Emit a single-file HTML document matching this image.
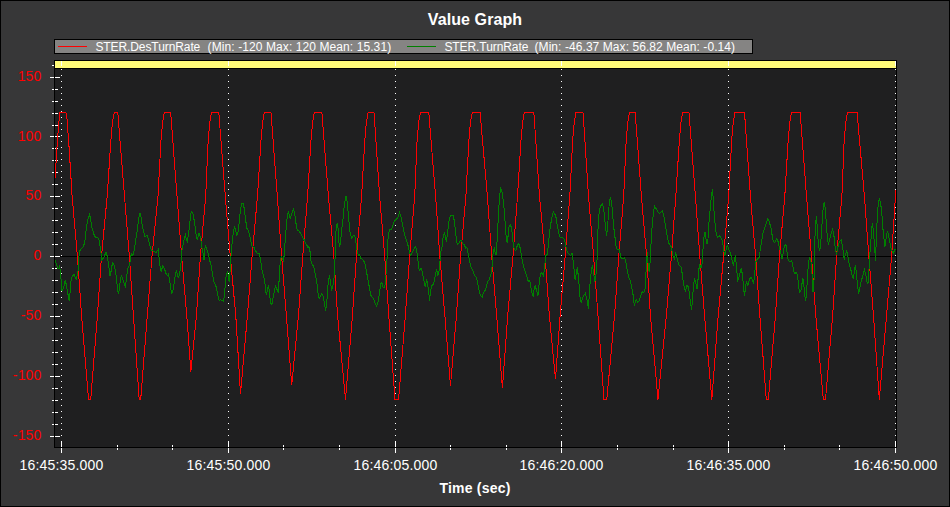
<!DOCTYPE html><html><head><meta charset="utf-8"><title>Value Graph</title><style>
html,body{margin:0;padding:0;background:#373738;}
body{width:950px;height:507px;position:relative;overflow:hidden;font-family:"Liberation Sans",Arial,sans-serif;}
.t{position:absolute;white-space:nowrap;line-height:1;color:#fff;}
.title{font-weight:bold;font-size:16px;letter-spacing:0.1px;left:0;width:950px;text-align:center;top:12px;}
.xt{font-weight:bold;font-size:14px;letter-spacing:0.2px;left:0;width:950px;text-align:center;top:481px;}
.yl{color:#ff0000;font-size:14px;letter-spacing:0.2px;width:41.6px;left:0;text-align:right;}
.xl{font-size:14px;letter-spacing:0.17px;width:120px;text-align:center;top:458px;}
.lg{font-size:12px;top:41px;}
</style></head><body>
<svg width="950" height="507" viewBox="0 0 950 507" style="position:absolute;left:0;top:0" shape-rendering="crispEdges">
<rect x="0" y="0" width="950" height="507" fill="#000"/>
<rect x="1" y="1" width="948" height="505" fill="#373738"/>
<rect x="54" y="39" width="699" height="15" fill="#000"/>
<rect x="55" y="40" width="697" height="13" fill="#858483"/>
<rect x="58" y="46" width="29" height="1" fill="#ff0000"/>
<rect x="407" y="46" width="29" height="1" fill="#008000"/>
<rect x="55" y="61" width="841" height="386" fill="#1f1f20"/>
<rect x="55" y="61" width="841" height="7" fill="#fffa78"/>
<rect x="55" y="68" width="841" height="1" fill="#000"/>
<rect x="55" y="256" width="841" height="1" fill="#000"/>
<rect x="61" y="69" width="1" height="1" fill="#fff"/>
<rect x="61" y="75" width="1" height="1" fill="#fff"/>
<rect x="61" y="81" width="1" height="1" fill="#fff"/>
<rect x="61" y="87" width="1" height="1" fill="#fff"/>
<rect x="61" y="93" width="1" height="1" fill="#fff"/>
<rect x="61" y="99" width="1" height="1" fill="#fff"/>
<rect x="61" y="105" width="1" height="1" fill="#fff"/>
<rect x="61" y="111" width="1" height="1" fill="#fff"/>
<rect x="61" y="117" width="1" height="1" fill="#fff"/>
<rect x="61" y="123" width="1" height="1" fill="#fff"/>
<rect x="61" y="129" width="1" height="1" fill="#fff"/>
<rect x="61" y="135" width="1" height="1" fill="#fff"/>
<rect x="61" y="141" width="1" height="1" fill="#fff"/>
<rect x="61" y="147" width="1" height="1" fill="#fff"/>
<rect x="61" y="153" width="1" height="1" fill="#fff"/>
<rect x="61" y="159" width="1" height="1" fill="#fff"/>
<rect x="61" y="165" width="1" height="1" fill="#fff"/>
<rect x="61" y="171" width="1" height="1" fill="#fff"/>
<rect x="61" y="177" width="1" height="1" fill="#fff"/>
<rect x="61" y="183" width="1" height="1" fill="#fff"/>
<rect x="61" y="189" width="1" height="1" fill="#fff"/>
<rect x="61" y="195" width="1" height="1" fill="#fff"/>
<rect x="61" y="201" width="1" height="1" fill="#fff"/>
<rect x="61" y="207" width="1" height="1" fill="#fff"/>
<rect x="61" y="213" width="1" height="1" fill="#fff"/>
<rect x="61" y="219" width="1" height="1" fill="#fff"/>
<rect x="61" y="225" width="1" height="1" fill="#fff"/>
<rect x="61" y="231" width="1" height="1" fill="#fff"/>
<rect x="61" y="237" width="1" height="1" fill="#fff"/>
<rect x="61" y="243" width="1" height="1" fill="#fff"/>
<rect x="61" y="249" width="1" height="1" fill="#fff"/>
<rect x="61" y="255" width="1" height="1" fill="#fff"/>
<rect x="61" y="261" width="1" height="1" fill="#fff"/>
<rect x="61" y="267" width="1" height="1" fill="#fff"/>
<rect x="61" y="273" width="1" height="1" fill="#fff"/>
<rect x="61" y="279" width="1" height="1" fill="#fff"/>
<rect x="61" y="285" width="1" height="1" fill="#fff"/>
<rect x="61" y="291" width="1" height="1" fill="#fff"/>
<rect x="61" y="297" width="1" height="1" fill="#fff"/>
<rect x="61" y="303" width="1" height="1" fill="#fff"/>
<rect x="61" y="309" width="1" height="1" fill="#fff"/>
<rect x="61" y="315" width="1" height="1" fill="#fff"/>
<rect x="61" y="321" width="1" height="1" fill="#fff"/>
<rect x="61" y="327" width="1" height="1" fill="#fff"/>
<rect x="61" y="333" width="1" height="1" fill="#fff"/>
<rect x="61" y="339" width="1" height="1" fill="#fff"/>
<rect x="61" y="345" width="1" height="1" fill="#fff"/>
<rect x="61" y="351" width="1" height="1" fill="#fff"/>
<rect x="61" y="357" width="1" height="1" fill="#fff"/>
<rect x="61" y="363" width="1" height="1" fill="#fff"/>
<rect x="61" y="369" width="1" height="1" fill="#fff"/>
<rect x="61" y="375" width="1" height="1" fill="#fff"/>
<rect x="61" y="381" width="1" height="1" fill="#fff"/>
<rect x="61" y="387" width="1" height="1" fill="#fff"/>
<rect x="61" y="393" width="1" height="1" fill="#fff"/>
<rect x="61" y="399" width="1" height="1" fill="#fff"/>
<rect x="61" y="405" width="1" height="1" fill="#fff"/>
<rect x="61" y="411" width="1" height="1" fill="#fff"/>
<rect x="61" y="417" width="1" height="1" fill="#fff"/>
<rect x="61" y="423" width="1" height="1" fill="#fff"/>
<rect x="61" y="429" width="1" height="1" fill="#fff"/>
<rect x="61" y="435" width="1" height="1" fill="#fff"/>
<rect x="61" y="441" width="1" height="1" fill="#fff"/>
<rect x="61" y="61" width="1" height="5" fill="#fff"/>
<rect x="61" y="442" width="1" height="11" fill="#fff"/>
<rect x="228" y="69" width="1" height="1" fill="#fff"/>
<rect x="228" y="75" width="1" height="1" fill="#fff"/>
<rect x="228" y="81" width="1" height="1" fill="#fff"/>
<rect x="228" y="87" width="1" height="1" fill="#fff"/>
<rect x="228" y="93" width="1" height="1" fill="#fff"/>
<rect x="228" y="99" width="1" height="1" fill="#fff"/>
<rect x="228" y="105" width="1" height="1" fill="#fff"/>
<rect x="228" y="111" width="1" height="1" fill="#fff"/>
<rect x="228" y="117" width="1" height="1" fill="#fff"/>
<rect x="228" y="123" width="1" height="1" fill="#fff"/>
<rect x="228" y="129" width="1" height="1" fill="#fff"/>
<rect x="228" y="135" width="1" height="1" fill="#fff"/>
<rect x="228" y="141" width="1" height="1" fill="#fff"/>
<rect x="228" y="147" width="1" height="1" fill="#fff"/>
<rect x="228" y="153" width="1" height="1" fill="#fff"/>
<rect x="228" y="159" width="1" height="1" fill="#fff"/>
<rect x="228" y="165" width="1" height="1" fill="#fff"/>
<rect x="228" y="171" width="1" height="1" fill="#fff"/>
<rect x="228" y="177" width="1" height="1" fill="#fff"/>
<rect x="228" y="183" width="1" height="1" fill="#fff"/>
<rect x="228" y="189" width="1" height="1" fill="#fff"/>
<rect x="228" y="195" width="1" height="1" fill="#fff"/>
<rect x="228" y="201" width="1" height="1" fill="#fff"/>
<rect x="228" y="207" width="1" height="1" fill="#fff"/>
<rect x="228" y="213" width="1" height="1" fill="#fff"/>
<rect x="228" y="219" width="1" height="1" fill="#fff"/>
<rect x="228" y="225" width="1" height="1" fill="#fff"/>
<rect x="228" y="231" width="1" height="1" fill="#fff"/>
<rect x="228" y="237" width="1" height="1" fill="#fff"/>
<rect x="228" y="243" width="1" height="1" fill="#fff"/>
<rect x="228" y="249" width="1" height="1" fill="#fff"/>
<rect x="228" y="255" width="1" height="1" fill="#fff"/>
<rect x="228" y="261" width="1" height="1" fill="#fff"/>
<rect x="228" y="267" width="1" height="1" fill="#fff"/>
<rect x="228" y="273" width="1" height="1" fill="#fff"/>
<rect x="228" y="279" width="1" height="1" fill="#fff"/>
<rect x="228" y="285" width="1" height="1" fill="#fff"/>
<rect x="228" y="291" width="1" height="1" fill="#fff"/>
<rect x="228" y="297" width="1" height="1" fill="#fff"/>
<rect x="228" y="303" width="1" height="1" fill="#fff"/>
<rect x="228" y="309" width="1" height="1" fill="#fff"/>
<rect x="228" y="315" width="1" height="1" fill="#fff"/>
<rect x="228" y="321" width="1" height="1" fill="#fff"/>
<rect x="228" y="327" width="1" height="1" fill="#fff"/>
<rect x="228" y="333" width="1" height="1" fill="#fff"/>
<rect x="228" y="339" width="1" height="1" fill="#fff"/>
<rect x="228" y="345" width="1" height="1" fill="#fff"/>
<rect x="228" y="351" width="1" height="1" fill="#fff"/>
<rect x="228" y="357" width="1" height="1" fill="#fff"/>
<rect x="228" y="363" width="1" height="1" fill="#fff"/>
<rect x="228" y="369" width="1" height="1" fill="#fff"/>
<rect x="228" y="375" width="1" height="1" fill="#fff"/>
<rect x="228" y="381" width="1" height="1" fill="#fff"/>
<rect x="228" y="387" width="1" height="1" fill="#fff"/>
<rect x="228" y="393" width="1" height="1" fill="#fff"/>
<rect x="228" y="399" width="1" height="1" fill="#fff"/>
<rect x="228" y="405" width="1" height="1" fill="#fff"/>
<rect x="228" y="411" width="1" height="1" fill="#fff"/>
<rect x="228" y="417" width="1" height="1" fill="#fff"/>
<rect x="228" y="423" width="1" height="1" fill="#fff"/>
<rect x="228" y="429" width="1" height="1" fill="#fff"/>
<rect x="228" y="435" width="1" height="1" fill="#fff"/>
<rect x="228" y="441" width="1" height="1" fill="#fff"/>
<rect x="228" y="61" width="1" height="5" fill="#fff"/>
<rect x="228" y="442" width="1" height="11" fill="#fff"/>
<rect x="395" y="69" width="1" height="1" fill="#fff"/>
<rect x="395" y="75" width="1" height="1" fill="#fff"/>
<rect x="395" y="81" width="1" height="1" fill="#fff"/>
<rect x="395" y="87" width="1" height="1" fill="#fff"/>
<rect x="395" y="93" width="1" height="1" fill="#fff"/>
<rect x="395" y="99" width="1" height="1" fill="#fff"/>
<rect x="395" y="105" width="1" height="1" fill="#fff"/>
<rect x="395" y="111" width="1" height="1" fill="#fff"/>
<rect x="395" y="117" width="1" height="1" fill="#fff"/>
<rect x="395" y="123" width="1" height="1" fill="#fff"/>
<rect x="395" y="129" width="1" height="1" fill="#fff"/>
<rect x="395" y="135" width="1" height="1" fill="#fff"/>
<rect x="395" y="141" width="1" height="1" fill="#fff"/>
<rect x="395" y="147" width="1" height="1" fill="#fff"/>
<rect x="395" y="153" width="1" height="1" fill="#fff"/>
<rect x="395" y="159" width="1" height="1" fill="#fff"/>
<rect x="395" y="165" width="1" height="1" fill="#fff"/>
<rect x="395" y="171" width="1" height="1" fill="#fff"/>
<rect x="395" y="177" width="1" height="1" fill="#fff"/>
<rect x="395" y="183" width="1" height="1" fill="#fff"/>
<rect x="395" y="189" width="1" height="1" fill="#fff"/>
<rect x="395" y="195" width="1" height="1" fill="#fff"/>
<rect x="395" y="201" width="1" height="1" fill="#fff"/>
<rect x="395" y="207" width="1" height="1" fill="#fff"/>
<rect x="395" y="213" width="1" height="1" fill="#fff"/>
<rect x="395" y="219" width="1" height="1" fill="#fff"/>
<rect x="395" y="225" width="1" height="1" fill="#fff"/>
<rect x="395" y="231" width="1" height="1" fill="#fff"/>
<rect x="395" y="237" width="1" height="1" fill="#fff"/>
<rect x="395" y="243" width="1" height="1" fill="#fff"/>
<rect x="395" y="249" width="1" height="1" fill="#fff"/>
<rect x="395" y="255" width="1" height="1" fill="#fff"/>
<rect x="395" y="261" width="1" height="1" fill="#fff"/>
<rect x="395" y="267" width="1" height="1" fill="#fff"/>
<rect x="395" y="273" width="1" height="1" fill="#fff"/>
<rect x="395" y="279" width="1" height="1" fill="#fff"/>
<rect x="395" y="285" width="1" height="1" fill="#fff"/>
<rect x="395" y="291" width="1" height="1" fill="#fff"/>
<rect x="395" y="297" width="1" height="1" fill="#fff"/>
<rect x="395" y="303" width="1" height="1" fill="#fff"/>
<rect x="395" y="309" width="1" height="1" fill="#fff"/>
<rect x="395" y="315" width="1" height="1" fill="#fff"/>
<rect x="395" y="321" width="1" height="1" fill="#fff"/>
<rect x="395" y="327" width="1" height="1" fill="#fff"/>
<rect x="395" y="333" width="1" height="1" fill="#fff"/>
<rect x="395" y="339" width="1" height="1" fill="#fff"/>
<rect x="395" y="345" width="1" height="1" fill="#fff"/>
<rect x="395" y="351" width="1" height="1" fill="#fff"/>
<rect x="395" y="357" width="1" height="1" fill="#fff"/>
<rect x="395" y="363" width="1" height="1" fill="#fff"/>
<rect x="395" y="369" width="1" height="1" fill="#fff"/>
<rect x="395" y="375" width="1" height="1" fill="#fff"/>
<rect x="395" y="381" width="1" height="1" fill="#fff"/>
<rect x="395" y="387" width="1" height="1" fill="#fff"/>
<rect x="395" y="393" width="1" height="1" fill="#fff"/>
<rect x="395" y="399" width="1" height="1" fill="#fff"/>
<rect x="395" y="405" width="1" height="1" fill="#fff"/>
<rect x="395" y="411" width="1" height="1" fill="#fff"/>
<rect x="395" y="417" width="1" height="1" fill="#fff"/>
<rect x="395" y="423" width="1" height="1" fill="#fff"/>
<rect x="395" y="429" width="1" height="1" fill="#fff"/>
<rect x="395" y="435" width="1" height="1" fill="#fff"/>
<rect x="395" y="441" width="1" height="1" fill="#fff"/>
<rect x="395" y="61" width="1" height="5" fill="#fff"/>
<rect x="395" y="442" width="1" height="11" fill="#fff"/>
<rect x="561" y="69" width="1" height="1" fill="#fff"/>
<rect x="561" y="75" width="1" height="1" fill="#fff"/>
<rect x="561" y="81" width="1" height="1" fill="#fff"/>
<rect x="561" y="87" width="1" height="1" fill="#fff"/>
<rect x="561" y="93" width="1" height="1" fill="#fff"/>
<rect x="561" y="99" width="1" height="1" fill="#fff"/>
<rect x="561" y="105" width="1" height="1" fill="#fff"/>
<rect x="561" y="111" width="1" height="1" fill="#fff"/>
<rect x="561" y="117" width="1" height="1" fill="#fff"/>
<rect x="561" y="123" width="1" height="1" fill="#fff"/>
<rect x="561" y="129" width="1" height="1" fill="#fff"/>
<rect x="561" y="135" width="1" height="1" fill="#fff"/>
<rect x="561" y="141" width="1" height="1" fill="#fff"/>
<rect x="561" y="147" width="1" height="1" fill="#fff"/>
<rect x="561" y="153" width="1" height="1" fill="#fff"/>
<rect x="561" y="159" width="1" height="1" fill="#fff"/>
<rect x="561" y="165" width="1" height="1" fill="#fff"/>
<rect x="561" y="171" width="1" height="1" fill="#fff"/>
<rect x="561" y="177" width="1" height="1" fill="#fff"/>
<rect x="561" y="183" width="1" height="1" fill="#fff"/>
<rect x="561" y="189" width="1" height="1" fill="#fff"/>
<rect x="561" y="195" width="1" height="1" fill="#fff"/>
<rect x="561" y="201" width="1" height="1" fill="#fff"/>
<rect x="561" y="207" width="1" height="1" fill="#fff"/>
<rect x="561" y="213" width="1" height="1" fill="#fff"/>
<rect x="561" y="219" width="1" height="1" fill="#fff"/>
<rect x="561" y="225" width="1" height="1" fill="#fff"/>
<rect x="561" y="231" width="1" height="1" fill="#fff"/>
<rect x="561" y="237" width="1" height="1" fill="#fff"/>
<rect x="561" y="243" width="1" height="1" fill="#fff"/>
<rect x="561" y="249" width="1" height="1" fill="#fff"/>
<rect x="561" y="255" width="1" height="1" fill="#fff"/>
<rect x="561" y="261" width="1" height="1" fill="#fff"/>
<rect x="561" y="267" width="1" height="1" fill="#fff"/>
<rect x="561" y="273" width="1" height="1" fill="#fff"/>
<rect x="561" y="279" width="1" height="1" fill="#fff"/>
<rect x="561" y="285" width="1" height="1" fill="#fff"/>
<rect x="561" y="291" width="1" height="1" fill="#fff"/>
<rect x="561" y="297" width="1" height="1" fill="#fff"/>
<rect x="561" y="303" width="1" height="1" fill="#fff"/>
<rect x="561" y="309" width="1" height="1" fill="#fff"/>
<rect x="561" y="315" width="1" height="1" fill="#fff"/>
<rect x="561" y="321" width="1" height="1" fill="#fff"/>
<rect x="561" y="327" width="1" height="1" fill="#fff"/>
<rect x="561" y="333" width="1" height="1" fill="#fff"/>
<rect x="561" y="339" width="1" height="1" fill="#fff"/>
<rect x="561" y="345" width="1" height="1" fill="#fff"/>
<rect x="561" y="351" width="1" height="1" fill="#fff"/>
<rect x="561" y="357" width="1" height="1" fill="#fff"/>
<rect x="561" y="363" width="1" height="1" fill="#fff"/>
<rect x="561" y="369" width="1" height="1" fill="#fff"/>
<rect x="561" y="375" width="1" height="1" fill="#fff"/>
<rect x="561" y="381" width="1" height="1" fill="#fff"/>
<rect x="561" y="387" width="1" height="1" fill="#fff"/>
<rect x="561" y="393" width="1" height="1" fill="#fff"/>
<rect x="561" y="399" width="1" height="1" fill="#fff"/>
<rect x="561" y="405" width="1" height="1" fill="#fff"/>
<rect x="561" y="411" width="1" height="1" fill="#fff"/>
<rect x="561" y="417" width="1" height="1" fill="#fff"/>
<rect x="561" y="423" width="1" height="1" fill="#fff"/>
<rect x="561" y="429" width="1" height="1" fill="#fff"/>
<rect x="561" y="435" width="1" height="1" fill="#fff"/>
<rect x="561" y="441" width="1" height="1" fill="#fff"/>
<rect x="561" y="61" width="1" height="5" fill="#fff"/>
<rect x="561" y="442" width="1" height="11" fill="#fff"/>
<rect x="728" y="69" width="1" height="1" fill="#fff"/>
<rect x="728" y="75" width="1" height="1" fill="#fff"/>
<rect x="728" y="81" width="1" height="1" fill="#fff"/>
<rect x="728" y="87" width="1" height="1" fill="#fff"/>
<rect x="728" y="93" width="1" height="1" fill="#fff"/>
<rect x="728" y="99" width="1" height="1" fill="#fff"/>
<rect x="728" y="105" width="1" height="1" fill="#fff"/>
<rect x="728" y="111" width="1" height="1" fill="#fff"/>
<rect x="728" y="117" width="1" height="1" fill="#fff"/>
<rect x="728" y="123" width="1" height="1" fill="#fff"/>
<rect x="728" y="129" width="1" height="1" fill="#fff"/>
<rect x="728" y="135" width="1" height="1" fill="#fff"/>
<rect x="728" y="141" width="1" height="1" fill="#fff"/>
<rect x="728" y="147" width="1" height="1" fill="#fff"/>
<rect x="728" y="153" width="1" height="1" fill="#fff"/>
<rect x="728" y="159" width="1" height="1" fill="#fff"/>
<rect x="728" y="165" width="1" height="1" fill="#fff"/>
<rect x="728" y="171" width="1" height="1" fill="#fff"/>
<rect x="728" y="177" width="1" height="1" fill="#fff"/>
<rect x="728" y="183" width="1" height="1" fill="#fff"/>
<rect x="728" y="189" width="1" height="1" fill="#fff"/>
<rect x="728" y="195" width="1" height="1" fill="#fff"/>
<rect x="728" y="201" width="1" height="1" fill="#fff"/>
<rect x="728" y="207" width="1" height="1" fill="#fff"/>
<rect x="728" y="213" width="1" height="1" fill="#fff"/>
<rect x="728" y="219" width="1" height="1" fill="#fff"/>
<rect x="728" y="225" width="1" height="1" fill="#fff"/>
<rect x="728" y="231" width="1" height="1" fill="#fff"/>
<rect x="728" y="237" width="1" height="1" fill="#fff"/>
<rect x="728" y="243" width="1" height="1" fill="#fff"/>
<rect x="728" y="249" width="1" height="1" fill="#fff"/>
<rect x="728" y="255" width="1" height="1" fill="#fff"/>
<rect x="728" y="261" width="1" height="1" fill="#fff"/>
<rect x="728" y="267" width="1" height="1" fill="#fff"/>
<rect x="728" y="273" width="1" height="1" fill="#fff"/>
<rect x="728" y="279" width="1" height="1" fill="#fff"/>
<rect x="728" y="285" width="1" height="1" fill="#fff"/>
<rect x="728" y="291" width="1" height="1" fill="#fff"/>
<rect x="728" y="297" width="1" height="1" fill="#fff"/>
<rect x="728" y="303" width="1" height="1" fill="#fff"/>
<rect x="728" y="309" width="1" height="1" fill="#fff"/>
<rect x="728" y="315" width="1" height="1" fill="#fff"/>
<rect x="728" y="321" width="1" height="1" fill="#fff"/>
<rect x="728" y="327" width="1" height="1" fill="#fff"/>
<rect x="728" y="333" width="1" height="1" fill="#fff"/>
<rect x="728" y="339" width="1" height="1" fill="#fff"/>
<rect x="728" y="345" width="1" height="1" fill="#fff"/>
<rect x="728" y="351" width="1" height="1" fill="#fff"/>
<rect x="728" y="357" width="1" height="1" fill="#fff"/>
<rect x="728" y="363" width="1" height="1" fill="#fff"/>
<rect x="728" y="369" width="1" height="1" fill="#fff"/>
<rect x="728" y="375" width="1" height="1" fill="#fff"/>
<rect x="728" y="381" width="1" height="1" fill="#fff"/>
<rect x="728" y="387" width="1" height="1" fill="#fff"/>
<rect x="728" y="393" width="1" height="1" fill="#fff"/>
<rect x="728" y="399" width="1" height="1" fill="#fff"/>
<rect x="728" y="405" width="1" height="1" fill="#fff"/>
<rect x="728" y="411" width="1" height="1" fill="#fff"/>
<rect x="728" y="417" width="1" height="1" fill="#fff"/>
<rect x="728" y="423" width="1" height="1" fill="#fff"/>
<rect x="728" y="429" width="1" height="1" fill="#fff"/>
<rect x="728" y="435" width="1" height="1" fill="#fff"/>
<rect x="728" y="441" width="1" height="1" fill="#fff"/>
<rect x="728" y="61" width="1" height="5" fill="#fff"/>
<rect x="728" y="442" width="1" height="11" fill="#fff"/>
<rect x="895" y="69" width="1" height="1" fill="#fff"/>
<rect x="895" y="75" width="1" height="1" fill="#fff"/>
<rect x="895" y="81" width="1" height="1" fill="#fff"/>
<rect x="895" y="87" width="1" height="1" fill="#fff"/>
<rect x="895" y="93" width="1" height="1" fill="#fff"/>
<rect x="895" y="99" width="1" height="1" fill="#fff"/>
<rect x="895" y="105" width="1" height="1" fill="#fff"/>
<rect x="895" y="111" width="1" height="1" fill="#fff"/>
<rect x="895" y="117" width="1" height="1" fill="#fff"/>
<rect x="895" y="123" width="1" height="1" fill="#fff"/>
<rect x="895" y="129" width="1" height="1" fill="#fff"/>
<rect x="895" y="135" width="1" height="1" fill="#fff"/>
<rect x="895" y="141" width="1" height="1" fill="#fff"/>
<rect x="895" y="147" width="1" height="1" fill="#fff"/>
<rect x="895" y="153" width="1" height="1" fill="#fff"/>
<rect x="895" y="159" width="1" height="1" fill="#fff"/>
<rect x="895" y="165" width="1" height="1" fill="#fff"/>
<rect x="895" y="171" width="1" height="1" fill="#fff"/>
<rect x="895" y="177" width="1" height="1" fill="#fff"/>
<rect x="895" y="183" width="1" height="1" fill="#fff"/>
<rect x="895" y="189" width="1" height="1" fill="#fff"/>
<rect x="895" y="195" width="1" height="1" fill="#fff"/>
<rect x="895" y="201" width="1" height="1" fill="#fff"/>
<rect x="895" y="207" width="1" height="1" fill="#fff"/>
<rect x="895" y="213" width="1" height="1" fill="#fff"/>
<rect x="895" y="219" width="1" height="1" fill="#fff"/>
<rect x="895" y="225" width="1" height="1" fill="#fff"/>
<rect x="895" y="231" width="1" height="1" fill="#fff"/>
<rect x="895" y="237" width="1" height="1" fill="#fff"/>
<rect x="895" y="243" width="1" height="1" fill="#fff"/>
<rect x="895" y="249" width="1" height="1" fill="#fff"/>
<rect x="895" y="255" width="1" height="1" fill="#fff"/>
<rect x="895" y="261" width="1" height="1" fill="#fff"/>
<rect x="895" y="267" width="1" height="1" fill="#fff"/>
<rect x="895" y="273" width="1" height="1" fill="#fff"/>
<rect x="895" y="279" width="1" height="1" fill="#fff"/>
<rect x="895" y="285" width="1" height="1" fill="#fff"/>
<rect x="895" y="291" width="1" height="1" fill="#fff"/>
<rect x="895" y="297" width="1" height="1" fill="#fff"/>
<rect x="895" y="303" width="1" height="1" fill="#fff"/>
<rect x="895" y="309" width="1" height="1" fill="#fff"/>
<rect x="895" y="315" width="1" height="1" fill="#fff"/>
<rect x="895" y="321" width="1" height="1" fill="#fff"/>
<rect x="895" y="327" width="1" height="1" fill="#fff"/>
<rect x="895" y="333" width="1" height="1" fill="#fff"/>
<rect x="895" y="339" width="1" height="1" fill="#fff"/>
<rect x="895" y="345" width="1" height="1" fill="#fff"/>
<rect x="895" y="351" width="1" height="1" fill="#fff"/>
<rect x="895" y="357" width="1" height="1" fill="#fff"/>
<rect x="895" y="363" width="1" height="1" fill="#fff"/>
<rect x="895" y="369" width="1" height="1" fill="#fff"/>
<rect x="895" y="375" width="1" height="1" fill="#fff"/>
<rect x="895" y="381" width="1" height="1" fill="#fff"/>
<rect x="895" y="387" width="1" height="1" fill="#fff"/>
<rect x="895" y="393" width="1" height="1" fill="#fff"/>
<rect x="895" y="399" width="1" height="1" fill="#fff"/>
<rect x="895" y="405" width="1" height="1" fill="#fff"/>
<rect x="895" y="411" width="1" height="1" fill="#fff"/>
<rect x="895" y="417" width="1" height="1" fill="#fff"/>
<rect x="895" y="423" width="1" height="1" fill="#fff"/>
<rect x="895" y="429" width="1" height="1" fill="#fff"/>
<rect x="895" y="435" width="1" height="1" fill="#fff"/>
<rect x="895" y="441" width="1" height="1" fill="#fff"/>
<rect x="895" y="61" width="1" height="5" fill="#fff"/>
<rect x="895" y="442" width="1" height="11" fill="#fff"/>
<rect x="117" y="445" width="1" height="5" fill="#fff"/>
<rect x="172" y="445" width="1" height="5" fill="#fff"/>
<rect x="283" y="445" width="1" height="5" fill="#fff"/>
<rect x="339" y="445" width="1" height="5" fill="#fff"/>
<rect x="450" y="445" width="1" height="5" fill="#fff"/>
<rect x="506" y="445" width="1" height="5" fill="#fff"/>
<rect x="617" y="445" width="1" height="5" fill="#fff"/>
<rect x="673" y="445" width="1" height="5" fill="#fff"/>
<rect x="784" y="445" width="1" height="5" fill="#fff"/>
<rect x="839" y="445" width="1" height="5" fill="#fff"/>
<rect x="50" y="436" width="10" height="1" fill="#fff"/>
<rect x="52" y="424" width="6" height="1" fill="#fff"/>
<rect x="52" y="412" width="6" height="1" fill="#fff"/>
<rect x="52" y="400" width="6" height="1" fill="#fff"/>
<rect x="52" y="388" width="6" height="1" fill="#fff"/>
<rect x="50" y="376" width="10" height="1" fill="#fff"/>
<rect x="52" y="364" width="6" height="1" fill="#fff"/>
<rect x="52" y="352" width="6" height="1" fill="#fff"/>
<rect x="52" y="340" width="6" height="1" fill="#fff"/>
<rect x="52" y="328" width="6" height="1" fill="#fff"/>
<rect x="50" y="316" width="10" height="1" fill="#fff"/>
<rect x="52" y="304" width="6" height="1" fill="#fff"/>
<rect x="52" y="292" width="6" height="1" fill="#fff"/>
<rect x="52" y="280" width="6" height="1" fill="#fff"/>
<rect x="52" y="268" width="6" height="1" fill="#fff"/>
<rect x="50" y="256" width="10" height="1" fill="#fff"/>
<rect x="52" y="244" width="6" height="1" fill="#fff"/>
<rect x="52" y="232" width="6" height="1" fill="#fff"/>
<rect x="52" y="220" width="6" height="1" fill="#fff"/>
<rect x="52" y="208" width="6" height="1" fill="#fff"/>
<rect x="50" y="196" width="10" height="1" fill="#fff"/>
<rect x="52" y="184" width="6" height="1" fill="#fff"/>
<rect x="52" y="172" width="6" height="1" fill="#fff"/>
<rect x="52" y="160" width="6" height="1" fill="#fff"/>
<rect x="52" y="148" width="6" height="1" fill="#fff"/>
<rect x="50" y="136" width="10" height="1" fill="#fff"/>
<rect x="52" y="125" width="6" height="1" fill="#fff"/>
<rect x="52" y="113" width="6" height="1" fill="#fff"/>
<rect x="52" y="101" width="6" height="1" fill="#fff"/>
<rect x="52" y="89" width="6" height="1" fill="#fff"/>
<rect x="50" y="77" width="10" height="1" fill="#fff"/>
<rect x="52" y="65" width="2" height="1" fill="#fff"/>
<clipPath id="c"><rect x="55" y="61" width="841" height="386"/></clipPath>
<g clip-path="url(#c)">
<polyline points="55.5,178.0 56.0,163.0 57.5,140.0 58.5,127.0 59.5,116.0 59.6,112.5 65.9,112.5 66.5,113.5 67.4,122.9 68.2,136.5 68.8,143.0 72.1,196.0 77.4,256.0 81.6,316.0 88.6,399.5 90.7,399.5 97.4,316.0 101.5,256.0 107.2,196.0 110.9,140.0 112.5,122.0 114.2,112.5 117.8,112.5 118.5,122.0 124.5,196.0 129.3,256.0 139.2,399.5 140.7,399.5 152.0,256.0 158.0,196.0 161.0,140.0 162.6,122.0 164.3,112.5 170.7,112.5 171.4,122.0 177.0,196.0 181.6,256.0 186.8,316.0 190.9,371.5 196.4,316.0 200.4,256.0 205.7,196.0 208.2,140.0 209.8,122.0 211.5,112.5 218.8,112.5 219.5,122.0 225.3,196.0 230.3,256.0 235.8,316.0 240.5,393.6 247.4,316.0 252.1,256.0 257.5,196.0 261.0,140.0 262.6,122.0 264.3,112.5 271.0,112.5 271.7,122.0 277.3,196.0 281.6,256.0 286.4,316.0 291.7,385.2 298.4,316.0 302.8,256.0 307.6,196.0 311.0,140.0 312.6,122.0 314.3,112.5 321.9,112.5 322.6,122.0 328.4,196.0 333.8,256.0 337.6,316.0 345.5,399.5 352.4,316.0 356.5,256.0 361.6,196.0 364.8,140.0 366.4,122.0 368.1,112.5 374.0,112.5 374.7,122.0 379.6,196.0 384.7,256.0 388.8,316.0 395.0,399.5 398.6,399.5 405.3,316.0 409.7,256.0 414.7,196.0 417.1,140.0 418.7,122.0 420.4,112.5 428.8,112.5 429.5,122.0 435.6,196.0 439.8,256.0 444.9,316.0 450.5,385.6 456.4,316.0 460.6,256.0 465.9,196.0 468.9,140.0 470.5,122.0 472.2,112.5 480.2,112.5 480.9,122.0 487.4,196.0 491.7,256.0 496.7,316.0 502.4,388.3 507.7,316.0 513.0,256.0 517.5,196.0 521.0,140.0 522.6,122.0 524.3,112.5 533.8,112.5 534.5,122.0 539.5,196.0 545.1,256.0 549.4,316.0 555.5,379.3 560.1,316.0 565.2,256.0 569.8,196.0 572.7,140.0 574.3,122.0 576.0,112.5 583.0,112.5 583.7,122.0 588.5,196.0 593.6,256.0 598.0,316.0 604.0,399.5 606.8,399.5 614.5,316.0 618.8,256.0 623.7,196.0 626.2,140.0 627.8,122.0 629.5,112.5 635.2,112.5 635.9,122.0 641.4,196.0 646.6,256.0 650.5,316.0 658.0,399.5 666.3,316.0 671.4,256.0 675.8,196.0 679.4,140.0 681.0,122.0 682.7,112.5 689.0,112.5 689.7,122.0 695.4,196.0 699.8,256.0 704.6,316.0 711.8,399.5 718.2,316.0 723.6,256.0 728.7,196.0 731.7,140.0 733.3,122.0 735.0,112.5 744.5,112.5 745.2,122.0 750.4,196.0 755.6,256.0 759.9,316.0 766.3,399.5 768.4,399.5 775.4,316.0 779.5,256.0 784.8,196.0 788.2,140.0 789.8,122.0 791.5,112.5 800.2,112.5 800.9,122.0 806.5,196.0 811.4,256.0 815.8,316.0 823.3,399.5 825.5,399.5 832.6,316.0 836.6,256.0 841.9,196.0 844.2,140.0 845.8,122.0 847.5,112.5 857.2,112.5 857.9,122.0 864.4,196.0 868.8,256.0 873.5,316.0 879.3,399.5 886.5,316.0 891.6,256.0 894.5,211.0 895.5,196.0 895.6,190.5" fill="none" stroke="#ff0000" stroke-width="1" stroke-linejoin="miter"/>
<polyline points="55.3,260.2 56.3,264.0 57.8,268.4 58.8,269.0 59.6,265.3 60.4,272.2 62.0,290.5 62.6,290.0 64.1,285.5 65.2,280.4 66.2,284.2 69.2,301.3 70.0,293.7 70.8,282.3 72.1,276.6 74.0,274.1 75.3,277.3 76.5,279.2 78.0,271.0 78.8,259.6 79.3,252.0 79.5,251.0 83.0,247.0 84.7,243.0 86.6,226.0 88.0,219.0 89.5,214.5 90.4,218.0 92.0,228.0 94.5,236.0 96.0,238.0 97.7,237.0 99.3,241.0 101.0,253.0 101.5,256.0 101.8,260.2 103.7,257.7 105.0,254.5 106.0,252.2 107.1,255.8 108.4,263.4 110.0,276.0 110.6,274.0 112.5,262.7 114.4,265.9 115.7,272.2 118.2,293.7 118.8,292.4 120.1,282.3 121.4,275.4 122.6,279.2 125.2,286.7 126.4,279.8 127.7,268.4 129.6,264.6 130.8,257.0 131.2,254.0 132.0,256.0 133.5,254.0 135.0,245.0 137.0,232.0 138.0,224.0 139.5,213.5 140.5,214.0 142.0,224.0 143.5,231.0 145.0,236.5 147.0,235.5 148.0,238.0 150.0,246.0 151.5,250.5 153.0,251.0 156.0,252.5 158.3,249.5 159.0,257.0 159.3,259.6 159.9,265.9 161.2,271.6 162.7,265.9 164.3,268.4 166.2,274.1 167.5,275.4 168.5,274.1 169.3,278.0 170.4,286.1 171.6,293.0 172.6,292.4 173.9,284.8 175.2,276.0 176.4,269.7 177.7,276.6 178.7,277.9 180.0,271.0 180.8,264.0 181.7,258.3 182.1,247.8 183.4,244.0 184.3,237.7 185.5,234.5 186.3,239.6 187.2,241.5 188.4,235.2 189.7,223.8 190.9,213.7 191.8,211.4 192.8,213.0 194.1,220.0 195.4,228.8 196.6,238.3 197.6,239.0 198.9,233.6 199.8,234.5 200.7,239.0 201.7,246.5 203.0,252.8 203.6,255.4 204.0,260.0 204.5,251.6 205.5,245.5 206.5,249.0 207.7,251.6 208.6,255.4 209.5,259.6 211.2,265.9 212.4,273.5 213.7,281.0 214.6,283.6 215.6,284.8 216.8,289.9 218.1,296.8 219.1,300.6 220.4,299.4 221.9,300.6 223.4,301.3 224.4,296.2 225.4,283.6 226.3,274.1 227.6,271.6 228.5,277.3 229.2,281.7 230.1,271.0 230.7,259.6 231.4,251.6 232.2,241.5 233.3,232.6 234.5,226.3 235.5,230.1 236.8,235.2 238.1,231.4 239.3,221.3 240.6,208.6 241.8,203.6 243.4,203.6 244.4,209.9 245.6,220.0 246.9,228.2 248.2,230.7 249.4,233.9 250.7,240.2 252.0,245.9 254.1,247.8 256.0,251.6 257.0,253.1 259.2,253.5 259.8,255.9 260.8,260.8 261.7,268.4 262.9,274.1 263.8,276.6 265.1,284.8 265.8,292.4 266.7,294.3 267.6,288.6 268.4,285.5 269.3,291.2 270.1,298.7 271.2,305.0 272.2,303.2 273.4,295.6 274.7,289.3 275.7,286.4 277.2,289.9 278.1,291.8 278.8,285.5 279.5,272.2 280.4,259.6 281.4,257.0 283.3,260.2 284.1,256.0 285.2,240.2 286.4,225.0 287.4,215.0 288.6,211.4 289.6,216.8 290.5,218.1 291.7,213.7 293.4,209.3 294.6,212.4 295.6,220.0 296.5,227.6 297.5,230.1 299.0,230.7 300.9,233.9 302.8,237.7 304.1,239.6 305.4,242.7 306.9,245.3 307.9,247.8 308.9,246.5 309.8,250.3 310.5,254.1 310.7,259.6 311.9,264.0 313.6,266.5 314.8,272.2 316.1,278.5 317.4,286.7 318.2,295.0 319.3,298.7 320.3,296.8 321.5,293.4 323.0,295.6 324.3,302.5 325.6,310.7 326.6,305.0 327.5,291.2 328.4,279.8 329.4,276.6 330.4,281.0 331.5,289.9 332.5,288.0 333.4,282.3 334.4,276.0 335.0,259.6 335.4,240.2 336.3,226.3 337.6,223.2 338.2,230.1 338.8,241.5 339.7,247.2 340.7,240.2 342.0,227.6 343.0,218.7 343.9,208.6 345.2,199.8 345.8,196.0 346.6,196.0 347.3,203.6 348.3,213.7 349.3,225.0 350.2,233.3 351.5,238.3 352.7,236.4 354.0,235.2 355.3,237.7 356.1,244.0 357.2,251.6 358.4,255.4 359.4,254.4 360.7,258.3 363.5,260.2 365.0,264.0 366.2,269.7 367.5,277.3 368.8,284.2 370.0,291.2 371.0,295.6 372.6,297.5 374.2,300.0 375.5,304.4 376.7,306.3 378.4,300.6 379.6,291.2 380.9,283.6 381.8,282.3 383.0,286.7 383.9,288.0 385.2,284.8 386.0,274.7 386.8,260.8 387.3,257.0 387.5,244.0 388.6,233.3 389.9,229.5 391.4,229.9 392.6,226.3 394.1,221.9 395.8,219.4 397.7,218.1 399.6,212.4 400.8,216.2 402.1,222.5 403.4,228.8 404.6,235.2 406.5,240.2 407.8,244.6 408.8,249.0 409.7,253.5 410.9,255.4 412.2,252.2 413.9,249.0 415.6,246.5 416.6,250.3 417.5,255.4 417.9,259.6 418.5,267.8 419.8,270.3 421.0,268.4 422.3,272.2 423.6,279.2 424.8,285.5 425.5,286.1 426.5,279.2 427.4,283.0 428.6,289.9 429.5,300.6 430.5,292.4 431.5,286.1 433.7,283.6 434.9,277.3 436.6,269.0 437.8,275.4 438.7,274.7 439.6,264.6 440.4,258.3 440.6,252.8 441.9,247.8 442.5,242.7 443.4,235.2 444.7,232.4 445.4,237.7 446.3,241.5 447.2,236.4 448.2,227.6 449.2,220.0 450.1,216.2 451.0,215.2 453.3,215.2 454.1,220.0 455.2,228.2 456.0,236.4 457.3,244.6 458.3,244.0 460.2,240.8 461.5,240.2 462.7,244.0 464.4,244.6 465.6,248.4 466.9,247.2 467.8,250.3 468.4,256.6 469.0,258.3 470.3,264.6 471.6,268.4 473.2,271.6 474.7,275.4 476.2,277.3 477.5,282.3 478.8,289.3 480.4,295.0 482.1,297.2 483.6,292.4 485.8,289.3 487.4,282.3 489.3,279.2 490.9,274.7 492.2,265.9 492.7,257.0 493.2,251.6 494.4,248.4 495.3,253.5 496.0,255.0 496.6,250.3 497.4,235.0 498.6,211.0 499.5,197.0 500.7,188.5 501.7,190.0 502.6,196.0 503.6,203.6 504.5,212.4 505.4,227.6 506.4,240.2 507.1,242.7 507.9,237.7 508.9,227.6 510.2,224.4 511.5,227.6 512.5,236.4 513.4,246.5 514.6,249.7 515.9,250.3 517.2,245.9 518.8,243.4 520.1,247.8 521.3,254.1 522.2,260.8 523.5,265.9 524.7,270.3 526.4,274.7 527.6,279.8 528.9,281.7 529.8,280.4 530.7,286.1 532.3,294.3 533.2,296.8 534.2,288.6 535.2,286.1 536.5,289.9 538.0,295.6 539.0,284.8 540.3,274.7 541.5,272.8 543.3,275.4 544.3,271.0 545.3,259.6 546.2,254.5 547.1,254.7 547.9,249.0 548.7,241.5 549.6,231.4 550.9,223.2 552.1,216.2 553.4,211.8 554.7,213.7 555.9,216.8 556.9,223.2 558.2,230.1 559.5,236.4 560.7,237.4 563.0,237.7 564.5,239.6 565.5,244.0 566.4,249.0 567.7,252.8 568.9,254.1 570.8,255.4 572.1,253.5 572.7,258.3 573.6,263.4 574.4,274.7 575.3,280.4 576.5,271.0 577.4,267.2 578.4,277.3 579.4,288.6 580.3,301.3 581.2,302.5 582.8,297.5 584.1,295.0 585.4,293.4 586.6,298.1 587.9,305.0 588.5,308.8 589.2,296.2 590.4,278.5 591.7,268.4 592.6,265.3 593.6,273.5 594.8,281.7 595.8,277.3 596.7,262.1 597.4,257.0 597.4,240.2 598.4,221.3 599.3,211.2 600.5,206.1 602.4,204.2 603.7,208.6 604.7,218.7 605.6,227.6 606.5,235.8 607.5,229.0 608.5,212.4 609.5,201.0 610.4,197.0 611.6,202.3 612.6,213.7 613.6,226.3 614.9,236.4 615.8,245.3 617.1,249.7 618.9,249.0 620.0,252.8 620.8,257.5 622.7,259.0 624.6,257.8 625.9,262.7 627.2,269.7 628.4,276.6 630.1,280.4 631.6,286.1 633.1,295.0 634.4,306.3 635.4,300.6 636.4,299.7 637.6,302.5 639.2,300.6 640.7,296.2 642.3,291.8 644.0,292.4 645.2,288.6 645.7,277.3 646.5,264.6 646.9,257.7 647.4,251.6 647.7,259.6 648.6,268.4 649.3,272.2 649.9,264.6 650.5,254.0 651.2,240.2 652.4,222.5 653.7,209.9 654.6,206.4 656.2,208.6 657.8,211.8 659.4,213.7 660.9,212.4 662.3,210.5 663.4,213.7 664.7,221.3 665.9,228.8 667.2,236.4 668.5,242.7 670.1,245.3 671.7,247.2 672.2,252.8 673.3,257.0 674.5,258.8 675.5,253.4 676.4,255.3 677.3,259.4 678.6,264.6 680.2,266.1 681.5,267.8 682.4,276.0 683.4,282.3 684.4,288.6 685.6,291.2 686.9,285.5 688.2,286.7 689.4,293.7 690.3,301.9 691.6,310.1 692.5,300.0 693.5,284.8 694.5,278.5 695.7,282.3 697.0,289.3 697.9,281.0 698.8,269.7 699.8,264.0 701.0,267.8 702.0,264.6 702.4,255.0 703.3,246.5 703.8,238.9 704.6,232.6 705.3,232.6 705.8,237.7 707.1,244.0 708.0,238.9 708.6,226.3 709.6,214.9 710.5,206.1 711.4,196.0 712.4,189.0 713.0,196.0 713.8,208.0 714.8,221.3 715.8,231.0 717.3,237.3 719.1,235.8 720.4,237.0 722.0,240.2 723.3,246.5 724.1,252.8 724.9,255.4 725.8,251.6 726.7,246.5 727.7,245.5 728.7,249.0 730.0,252.2 731.3,256.5 732.5,262.1 733.4,265.9 734.3,260.8 735.3,255.3 735.9,260.8 736.8,270.9 737.8,280.4 738.8,278.5 740.1,272.2 741.3,268.4 742.6,276.0 743.5,287.4 744.4,296.2 745.4,288.6 746.4,281.0 747.9,285.5 749.4,279.2 751.1,277.3 752.3,279.8 753.6,284.2 754.8,272.2 755.7,262.1 756.7,260.0 758.0,258.7 759.3,257.0 760.5,247.8 761.8,240.2 763.1,232.6 764.6,228.8 766.2,223.2 767.5,219.0 768.7,219.4 770.0,224.4 771.3,228.8 772.1,235.2 773.2,240.8 774.2,242.5 775.4,241.5 776.7,238.9 778.0,241.5 779.2,246.5 780.1,250.3 781.2,254.3 782.1,259.4 782.8,256.2 783.5,250.3 784.5,245.9 785.8,244.6 786.8,249.0 787.3,256.0 788.4,260.5 790.2,261.5 791.8,260.8 792.7,264.6 793.6,270.9 794.9,273.5 796.5,272.2 797.4,275.4 798.4,283.6 799.4,292.4 800.7,291.8 802.0,283.6 802.8,277.9 803.7,283.6 804.7,295.0 805.7,300.6 806.6,292.4 807.5,276.0 808.5,262.1 809.8,257.7 811.0,262.1 812.1,274.7 812.9,292.4 813.8,289.9 814.2,270.9 814.6,256.0 815.2,227.6 816.4,216.5 817.2,226.0 817.9,237.7 818.8,247.0 819.6,251.2 820.5,245.3 821.5,233.2 822.5,216.2 823.4,204.8 824.3,202.2 825.3,208.6 826.2,222.0 827.1,234.5 828.4,244.6 829.6,239.5 830.9,233.9 832.6,229.5 833.9,235.2 834.7,244.0 835.6,249.0 836.6,255.4 837.6,247.8 839.2,242.7 841.1,239.6 842.3,245.3 843.2,251.6 844.2,259.7 845.2,255.0 846.5,251.2 847.7,254.3 848.6,260.8 849.5,265.3 850.8,269.7 852.0,274.7 853.3,278.5 854.3,272.2 855.3,264.6 856.2,270.9 857.1,281.0 858.1,289.9 858.7,293.7 859.6,288.6 861.3,281.0 862.9,275.4 864.4,269.7 865.7,274.1 866.9,281.7 868.0,283.6 868.8,273.5 869.5,258.7 870.5,246.5 871.4,232.6 872.3,223.2 873.3,230.1 874.3,242.7 875.2,255.4 875.5,260.8 875.8,252.8 876.4,236.4 877.3,216.2 878.3,203.6 879.3,198.0 880.6,203.6 881.5,209.9 882.4,221.3 883.1,230.7 884.0,238.9 884.9,247.2 885.9,240.2 887.2,231.4 888.4,233.9 889.4,240.2 890.7,246.5 892.2,251.6 893.5,253.5 894.7,249.0 895.5,249.0" fill="none" stroke="#008000" stroke-width="1" stroke-linejoin="miter"/>
</g>
<rect x="54" y="60" width="843" height="1" fill="#000"/>
<rect x="54" y="447" width="843" height="1" fill="#000"/>
<rect x="54" y="60" width="1" height="388" fill="#000"/>
<rect x="896" y="60" width="1" height="388" fill="#000"/>
</svg>
<div class="t title">Value Graph</div>
<div class="t xt">Time (sec)</div>
<div class="t yl" style="top:428.0px">-150</div>
<div class="t yl" style="top:368.1px">-100</div>
<div class="t yl" style="top:308.2px">-50</div>
<div class="t yl" style="top:248.3px">0</div>
<div class="t yl" style="top:188.4px">50</div>
<div class="t yl" style="top:128.5px">100</div>
<div class="t yl" style="top:68.6px">150</div>
<div class="t xl" style="left:1.5px">16:45:35.000</div>
<div class="t xl" style="left:168.5px">16:45:50.000</div>
<div class="t xl" style="left:335.5px">16:46:05.000</div>
<div class="t xl" style="left:501.5px">16:46:20.000</div>
<div class="t xl" style="left:668.5px">16:46:35.000</div>
<div class="t xl" style="left:835.5px">16:46:50.000</div>
<div class="t lg" style="left:95.4px;letter-spacing:-0.09px">STER.DesTurnRate</div>
<div class="t lg" style="left:207.6px;letter-spacing:0.09px">(Min: -120 Max: 120 Mean: 15.31)</div>
<div class="t lg" style="left:444.4px;letter-spacing:-0.08px">STER.TurnRate</div>
<div class="t lg" style="left:534.5px;letter-spacing:0.07px">(Min: -46.37 Max: 56.82 Mean: -0.14)</div>
</body></html>
